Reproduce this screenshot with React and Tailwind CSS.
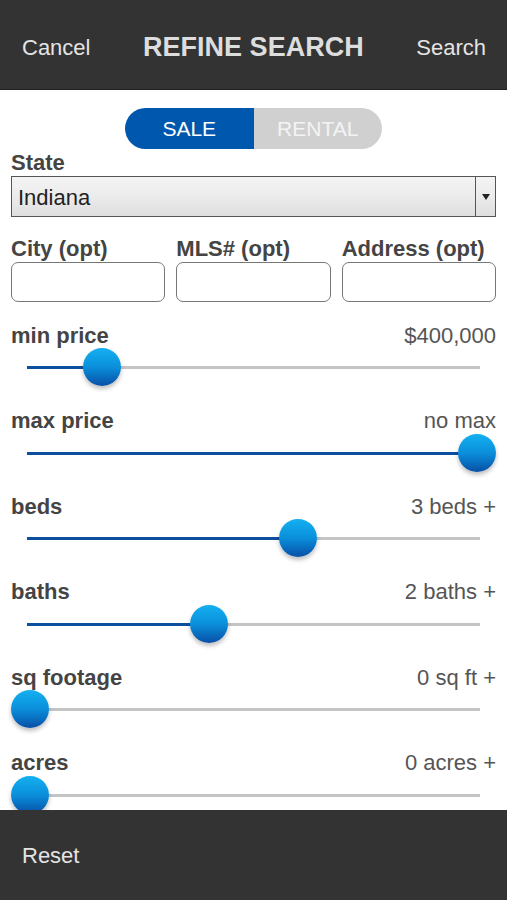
import React from "react";

const sliders = [
  { label: "min price", value: "$400,000", pos: 75 },
  { label: "max price", value: "no max", pos: 450 },
  { label: "beds", value: "3 beds +", pos: 271 },
  { label: "baths", value: "2 baths +", pos: 182 },
  { label: "sq footage", value: "0 sq ft +", pos: 3 },
  { label: "acres", value: "0 acres +", pos: 3 },
];

function Slider({ pos }) {
  return (
    <div className="relative h-[38px] mx-[16px]">
      <div className="absolute left-0 right-0 top-[18px] h-[3px] bg-[#c4c4c4]" />
      <div
        className="absolute left-0 top-[18px] h-[3px] bg-[#0d4f9f]"
        style={{ width: pos }}
      />
      <div
        className="absolute top-0 w-[38px] h-[38px] -ml-[19px] rounded-full bg-gradient-to-b from-[#14b0f0] via-[#0b8fdb] to-[#0a4fa6] shadow-[0_3px_4px_rgba(0,0,0,0.25)]"
        style={{ left: pos }}
      />
    </div>
  );
}

function TextField({ label }) {
  return (
    <div className="flex flex-col flex-1">
      <span className="text-[22px] leading-[26px] font-bold text-[#444] whitespace-nowrap">
        {label}
      </span>
      <div className="h-[40px] border-[1.5px] border-[#777] rounded-[7px] bg-white" />
    </div>
  );
}

export default function App() {
  return (
    <div className="h-[900px] flex flex-col bg-white overflow-hidden font-['Liberation_Sans',Arial,sans-serif]">
      <div className="h-[90px] shrink-0 bg-[#333] border-b border-[#222] flex items-center justify-between px-[22px] pt-[5px] text-[#e4e4e4]">
        <span className="text-[22px]">Cancel</span>
        <span className="text-[27px] font-bold text-[#ddd]">REFINE SEARCH</span>
        <span className="text-[22px] -mr-[1px]">Search</span>
      </div>

      <div className="flex-1 overflow-hidden px-[11px]">
        <div className="flex justify-center mt-[18px]">
          <div className="flex h-[41px] w-[257px] rounded-full overflow-hidden text-[21px]">
            <div className="flex-1 bg-[#0057ae] text-white flex items-center justify-center">
              SALE
            </div>
            <div className="flex-1 bg-[#d0d0d0] text-[#f4f4f4] flex items-center justify-center">
              RENTAL
            </div>
          </div>
        </div>

        <div className="mt-[1px] text-[22px] leading-[26px] font-bold text-[#444]">State</div>
        <div className="h-[41px] flex border-[1.5px] border-[#555] bg-gradient-to-b from-[#f4f4f4] via-[#ececec] to-[#dedede]">
          <div className="flex-1 flex items-center pl-[6px] pt-[2px] text-[22px] text-[#222]">
            Indiana
          </div>
          <div className="w-[20px] border-l-[1.5px] border-[#555] flex items-center justify-center">
            <svg width="8" height="6" viewBox="0 0 8 6">
              <path d="M0 0h8L4 6z" fill="#222" />
            </svg>
          </div>
        </div>

        <div className="flex gap-[11px] mt-[19px]">
          <TextField label="City (opt)" />
          <TextField label="MLS# (opt)" />
          <TextField label="Address (opt)" />
        </div>

        <div className="mt-[20px]">
          {sliders.map((s) => (
            <div key={s.label} className="h-[85.6px]">
              <div className="flex justify-between items-center h-[26px] text-[22px]">
                <span className="font-bold text-[#444]">{s.label}</span>
                <span className="text-[#555]">{s.value}</span>
              </div>
              <Slider pos={s.pos} />
            </div>
          ))}
        </div>
      </div>

      <div className="h-[90px] shrink-0 bg-[#333] flex items-center px-[22px]">
        <span className="text-[22px] text-[#e4e4e4]">Reset</span>
      </div>
    </div>
  );
}
